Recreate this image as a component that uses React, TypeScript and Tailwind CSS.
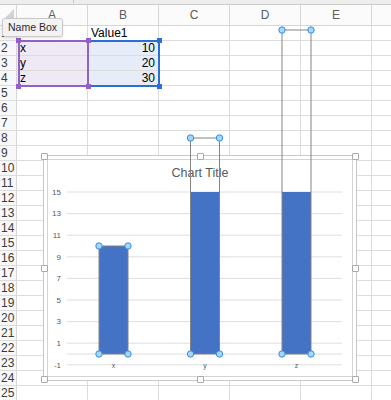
import React, { FC } from "react";

const cols = ["A", "B", "C", "D", "E", "F"];
const rows = Array.from({ length: 25 }, (_, i) => i + 1);

const cellText: Record<string, string> = {
  A1: "Name",
  B1: "Value1",
  A2: "x",
  A3: "y",
  A4: "z",
  B2: "10",
  B3: "20",
  B4: "30",
};

// chart scale (page pixels)
const baseY = 354;
const unit = 10.8;
const vy = (v: number) => baseY - v * unit;
const plotTop = vy(15);

const bars = [
  { label: "x", x: 99, value: 10 },
  { label: "y", x: 190.5, value: 20 },
  { label: "z", x: 282, value: 30 },
];
const barW = 29;
const ticks = [15, 13, 11, 9, 7, 5, 3, 1, -1];

const Handle: FC = () => (
  <div className="h-[7px] w-[7px] rounded-[1px] border border-[#a9a9a9] bg-white" />
);

const Dot: FC<{ color: string }> = ({ color }) => (
  <div className={"h-[5px] w-[5px] " + color} />
);

const Sheet: FC = () => (
  <div>
    <div className="flex h-[5px] border-b border-[#cdcdcd] bg-[#ededed] pl-[73px]">
      <div className="h-[3px] w-px bg-[#c4c4c4]" />
    </div>
    <div className="flex h-[21px] border-b border-[#d6d6d6] bg-[#fbfbfb]">
      <div className="flex w-[17px] shrink-0 items-end justify-end border-r border-[#d6d6d6] pb-[7px] pr-px">
        <svg width="10" height="9">
          <path d="M9 0 L9 9 L0 9 Z" fill="#d3d3d3" />
        </svg>
      </div>
      {cols.map((c) => (
        <div
          key={c}
          className="flex w-[71px] shrink-0 items-center justify-center border-r border-[#d6d6d6] text-[12px] text-[#5c5c5c]"
        >
          {c !== "F" && c}
        </div>
      ))}
    </div>
    {rows.map((r) => (
      <div key={r} className="flex h-[15px] border-b border-[#dcdcdc]">
        <div className="flex w-[17px] shrink-0 items-center justify-start overflow-visible border-r border-[#d6d6d6] bg-[#f8f8f8] pl-[1px] text-[12px] leading-[14px] text-[#3c3c3c]">
          {r}
        </div>
        {cols.map((c) => {
          const t = cellText[c + r];
          const sel = r >= 2 && r <= 4;
          let bg = "";
          if (sel && c === "A") bg = "bg-[#efe9f6]";
          if (sel && c === "B") bg = "bg-[#e6edf8]";
          const right = c === "B" && r > 1;
          return (
            <div
              key={c}
              className={
                "flex w-[71px] shrink-0 items-center border-r border-[#dcdcdc] px-[3px] text-[12px] leading-[14px] text-black " +
                bg +
                (right ? " justify-end" : " justify-start")
              }
            >
              {t}
            </div>
          );
        })}
      </div>
    ))}
  </div>
);

const Chart: FC = () => (
  <div className="absolute left-[43px] top-[155px] h-[226px] w-[314px] border border-[#c8c8c8] bg-white p-[3px]">
    <div className="h-full w-full border border-[#d4d4d4] bg-white">
      <div className="pt-[6px] text-center text-[12.5px] leading-[15px] text-[#595959]">
        Chart Title
      </div>
    </div>
    <svg
      className="absolute left-[-1px] top-[-1px] overflow-visible"
      width="314"
      height="226"
      viewBox="43 155 314 226"
    >
      {ticks.map((t) => (
        <g key={t}>
          <line x1="67" x2="342" y1={vy(t)} y2={vy(t)} stroke="#dedede" strokeWidth="1" />
          <text
            x="61"
            y={vy(t) + 2.8}
            textAnchor="end"
            fontSize="8"
            fill="#595959"
            fontFamily="Liberation Sans, Arial, sans-serif"
          >
            {t}
          </text>
        </g>
      ))}
      <line x1="67" x2="342" y1={baseY} y2={baseY} stroke="#dedede" strokeWidth="1" />
      {bars.map((b) => {
        const top = vy(b.value);
        const fillTop = Math.max(top, plotTop);
        return (
          <g key={b.label}>
            <rect
              x={b.x}
              y={fillTop}
              width={barW}
              height={baseY - fillTop}
              fill="#4472c4"
            />
            <rect
              x={b.x}
              y={top}
              width={barW}
              height={baseY - top}
              fill="none"
              stroke="#838383"
              strokeWidth="1"
            />
            <text
              x={b.x + barW / 2}
              y="368"
              textAnchor="middle"
              fontSize="7"
              fill="#595959"
              fontFamily="Liberation Sans, Arial, sans-serif"
            >
              {b.label}
            </text>
            {[
              [b.x, top],
              [b.x + barW, top],
              [b.x, baseY],
              [b.x + barW, baseY],
            ].map(([cx, cy], i) => (
              <circle
                key={i}
                cx={cx}
                cy={cy}
                r="3.2"
                fill="#a9d5f8"
                stroke="#2c8fe6"
                strokeWidth="1"
              />
            ))}
          </g>
        );
      })}
    </svg>
    {/* resize handles */}
    <div className="absolute inset-[-3px] flex flex-col justify-between">
      <div className="flex justify-between">
        <Handle />
        <Handle />
        <Handle />
      </div>
      <div className="flex justify-between">
        <Handle />
        <Handle />
      </div>
      <div className="flex justify-between">
        <Handle />
        <Handle />
        <Handle />
      </div>
    </div>
  </div>
);

const App: FC = () => {
  return (
    <div className="relative h-[400px] w-[391px] overflow-hidden bg-white font-['Liberation_Sans',Arial,sans-serif]">
      <Sheet />

      {/* selection A2:A4 and B2:B4 */}
      <div className="absolute left-[16px] top-[38px] flex">
        <div className="relative h-[51px] w-[75px] p-[2px]">
          <div className="h-full w-full border-2 border-[#9061c9]" />
          <div className="absolute inset-0 flex flex-col justify-between">
            <div className="flex justify-between">
              <Dot color="bg-[#9061c9]" />
              <Dot color="bg-[#9061c9]" />
            </div>
            <div className="flex justify-between">
              <Dot color="bg-[#9061c9]" />
              <Dot color="bg-[#9061c9]" />
            </div>
          </div>
        </div>
        <div className="relative h-[51px] w-[71px] py-[2px] pr-[2px]">
          <div className="h-full w-full border-2 border-l-0 border-[#2b6fd6]" />
          <div className="absolute inset-0 flex flex-col items-end justify-between">
            <Dot color="bg-[#2b6fd6]" />
            <Dot color="bg-[#2b6fd6]" />
          </div>
        </div>
      </div>

      {/* tooltip */}
      <div className="absolute left-[2px] top-[18px] flex h-[19px] items-center rounded-[3px] border border-[#c9c9c9] bg-[#f3f3f3] px-[5px] text-[10.5px] text-[#2b2b2b] shadow-sm">
        Name Box
      </div>

      <Chart />
    </div>
  );
};

export default App;
